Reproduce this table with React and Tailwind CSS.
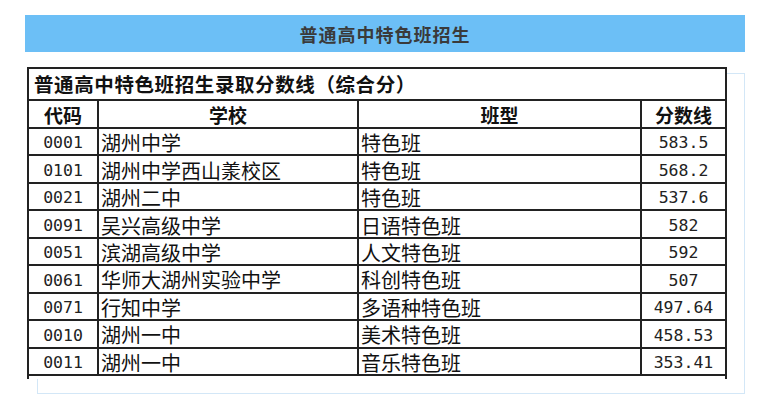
const rows = [
  { code: '0001', school: '湖州中学', type: '特色班', score: '583.5' },
  { code: '0101', school: '湖州中学西山羕校区', type: '特色班', score: '568.2' },
  { code: '0021', school: '湖州二中', type: '特色班', score: '537.6' },
  { code: '0091', school: '吴兴高级中学', type: '日语特色班', score: '582' },
  { code: '0051', school: '滨湖高级中学', type: '人文特色班', score: '592' },
  { code: '0061', school: '华师大湖州实验中学', type: '科创特色班', score: '507' },
  { code: '0071', school: '行知中学', type: '多语种特色班', score: '497.64' },
  { code: '0010', school: '湖州一中', type: '美术特色班', score: '458.53' },
  { code: '0011', school: '湖州一中', type: '音乐特色班', score: '353.41' },
];

const cjk = "font-['Noto_Sans_CJK_SC',sans-serif]";
const mono = "font-['DejaVu_Sans_Mono','Liberation_Mono',monospace]";

export default function App() {
  return (
    <div className="w-[775px] h-[400px] bg-white overflow-hidden">
      <div className="pt-[15px] pl-[25px]">
        <div className="w-[720px] h-[37px] bg-[#6cbff6] flex items-center justify-center">
          <span className={`${cjk} text-[18px] font-bold tracking-[1px] text-[#3a3a3a] leading-none`}>
            普通高中特色班招生
          </span>
        </div>
      </div>

      <div className="ml-[37px] mt-[21px] w-[708px] h-[321px] border border-[#d3e7f7]">
        {/* score table, overhangs the frame */}
        <div className="-ml-[11px] -mt-[7px] w-[700px] bg-white border-x-2 border-t-2 border-[#222] pb-[3px]">
          <div className={`${cjk} h-[32px] border-b-2 border-[#222] flex items-center pl-[5px] text-[19.5px] font-bold tracking-[0.6px] text-[#111] leading-none`}>
            普通高中特色班招生录取分数线（综合分）
          </div>
          <div className="grid grid-cols-[70px_260px_283px_83px]">
            {['代码', '学校', '班型', '分数线'].map((h, i) => (
              <div
                key={h}
                className={`${cjk} h-[28px] border-b-2 border-[#222] ${i < 3 ? 'border-r-2' : ''} flex items-center justify-center text-[19px] font-bold text-[#111] leading-none`}
              >
                {h}
              </div>
            ))}
            {rows.map((r) => (
              <div key={r.code + r.type} className="contents">
                <div className={`${mono} h-[27.44px] border-b-2 border-r-2 border-[#222] flex items-center justify-center pt-[4px] text-[16.5px] text-[#222] leading-none`}>
                  {r.code}
                </div>
                <div className={`${cjk} h-[27.44px] border-b-2 border-r-2 border-[#222] flex items-center pl-[2px] pt-[3px] text-[20px] text-[#111] leading-none`}>
                  {r.school}
                </div>
                <div className={`${cjk} h-[27.44px] border-b-2 border-r-2 border-[#222] flex items-center pl-[2px] pt-[3px] text-[20px] text-[#111] leading-none`}>
                  {r.type}
                </div>
                <div className={`${mono} h-[27.44px] border-b-2 border-[#222] flex items-center justify-center pt-[4px] text-[16.5px] text-[#222] leading-none`}>
                  {r.score}
                </div>
              </div>
            ))}
          </div>
        </div>
      </div>
    </div>
  );
}
